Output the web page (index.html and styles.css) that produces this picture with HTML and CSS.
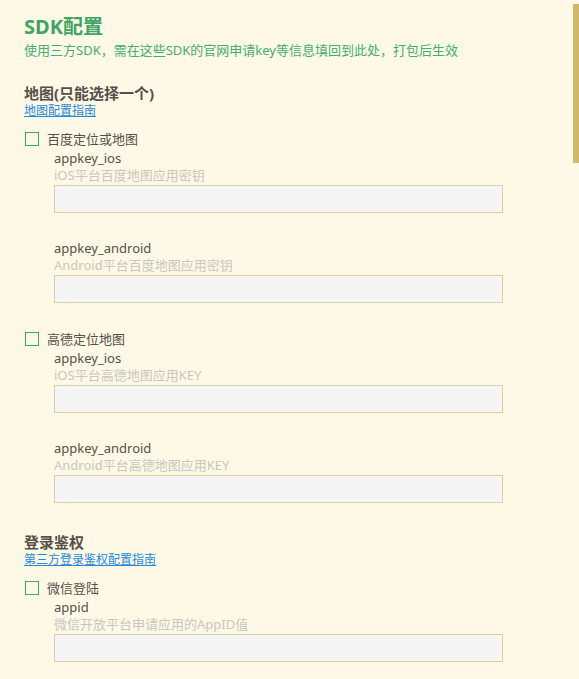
FILE: index.html
```html
<!DOCTYPE html>
<html lang="zh-CN">
<head>
<meta charset="utf-8">
<title>SDK配置</title>
<link rel="stylesheet" href="styles.css">
</head>
<body>
<div class="page">
  <h1 class="title">SDK配置</h1>
  <p class="subtitle">使用三方SDK，需在这些SDK的官网申请key等信息填回到此处，打包后生效</p>

  <section class="section">
    <h2 class="section-title">地图(只能选择一个)</h2>
    <a class="guide" href="#">地图配置指南</a>

    <div class="group">
      <label class="check"><span class="box"></span><span>百度定位或地图</span></label>
      <div class="field">
        <div class="field-name">appkey_ios</div>
        <div class="field-hint">iOS平台百度地图应用密钥</div>
        <input class="field-input" type="text">
      </div>
      <div class="field">
        <div class="field-name">appkey_android</div>
        <div class="field-hint">Android平台百度地图应用密钥</div>
        <input class="field-input" type="text">
      </div>
    </div>

    <div class="group">
      <label class="check"><span class="box"></span><span>高德定位地图</span></label>
      <div class="field">
        <div class="field-name">appkey_ios</div>
        <div class="field-hint">iOS平台高德地图应用KEY</div>
        <input class="field-input" type="text">
      </div>
      <div class="field">
        <div class="field-name">appkey_android</div>
        <div class="field-hint">Android平台高德地图应用KEY</div>
        <input class="field-input" type="text">
      </div>
    </div>
  </section>

  <section class="section">
    <h2 class="section-title">登录鉴权</h2>
    <a class="guide" href="#">第三方登录鉴权配置指南</a>

    <div class="group">
      <label class="check"><span class="box"></span><span>微信登陆</span></label>
      <div class="field">
        <div class="field-name">appid</div>
        <div class="field-hint">微信开放平台申请应用的AppID值</div>
        <input class="field-input" type="text">
      </div>
    </div>
  </section>
</div>
<div class="scroll-thumb"></div>
</body>
</html>
```
FILE: styles.css
```css
html {
  overflow: hidden;
  background: #fef8e6;
}
body {
  margin: 0;
  background: #fef8e6;
  font-family: "Noto Sans", "Noto Sans CJK SC", sans-serif;
  color: #555555;
}
.page {
  padding: 13px 24px 20px 24px;
}
.title {
  margin: 0;
  font-size: 20px;
  line-height: 28px;
  font-weight: 700;
  color: #3ea564;
}
.subtitle {
  margin: 0;
  font-size: 13px;
  line-height: 18px;
  color: #45ad6e;
}
.section {
  margin-top: 24px;
}
.section + .section {
  margin-top: 29px;
}
.section-title {
  margin: 0;
  font-size: 15px;
  line-height: 20px;
  font-weight: 700;
  color: #555049;
}
.guide {
  display: block;
  width: fit-content;
  font-size: 12px;
  line-height: 16px;
  height: 16px;
  color: #2489dc;
  text-decoration: underline;
}
.group {
  margin-top: 10px;
}
.group + .group {
  margin-top: 26px;
}
.check {
  display: flex;
  align-items: center;
  gap: 8px;
  height: 20px;
  font-size: 13px;
  line-height: 20px;
  color: #555049;
}
.box {
  box-sizing: border-box;
  flex: none;
  width: 14px;
  height: 14px;
  margin-left: 1px;
  border: 1px solid #3ea765;
  background: #fef8e6;
}
.field {
  padding-left: 30px;
}
.field + .field {
  margin-top: 26px;
}
.field-name {
  font-size: 13px;
  line-height: 18px;
  height: 18px;
  color: #555049;
}
.field-hint {
  font-size: 13px;
  line-height: 16px;
  height: 16px;
  color: #c9c7c0;
}
.field-input {
  display: block;
  box-sizing: border-box;
  margin: 2px 0 0 0;
  width: 449px;
  height: 28px;
  padding: 0 6px;
  border: 1px solid #dccfa3;
  border-radius: 0;
  background: #f5f5f5;
  font-family: inherit;
  font-size: 13px;
  outline: none;
}
.scroll-thumb {
  position: fixed;
  top: 4px;
  right: 0;
  width: 6px;
  height: 159px;
  background: #d2b86b;
}
```
